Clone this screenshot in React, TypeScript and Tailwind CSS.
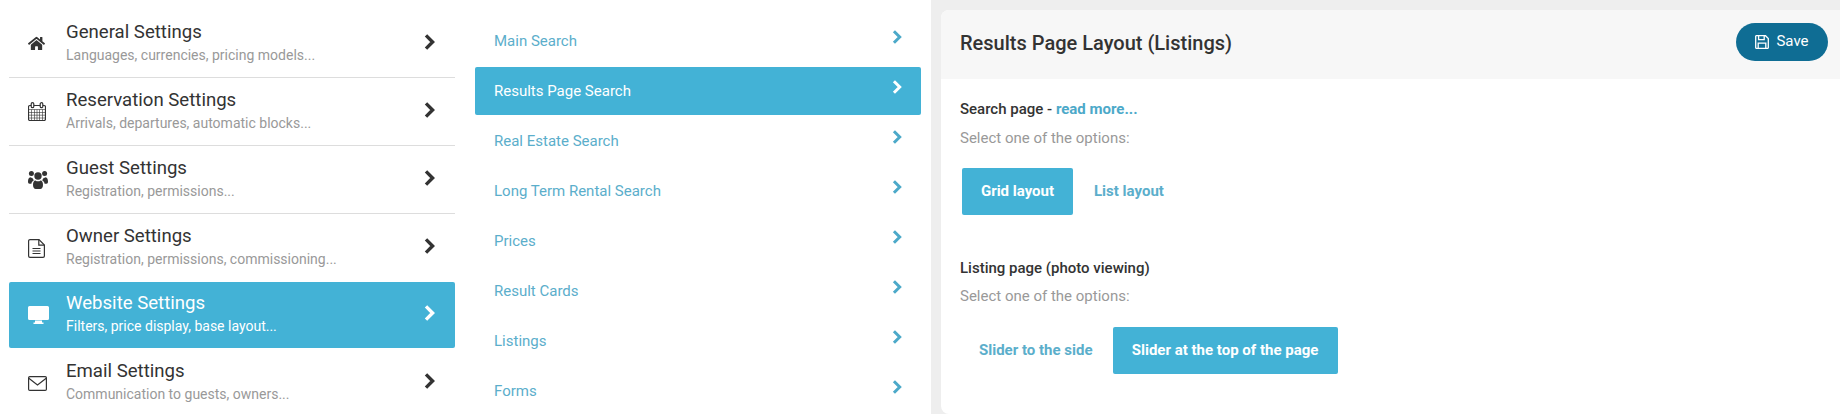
import { FaHome } from "react-icons/fa";

const Chevron = ({ className }: { className: string }) => (
  <svg viewBox="0 0 11 16" className={className} fill="none" stroke="currentColor" strokeWidth="3.4">
    <path d="M2 1.4 8.6 8 2 14.6" />
  </svg>
);

const CalendarIcon = () => (
  <svg viewBox="0 0 18 19" className="h-[19px] w-[18px]" fill="none" stroke="currentColor">
    <path d="M2 3.5h14a1.5 1.5 0 0 1 1.5 1.5v12a1.5 1.5 0 0 1-1.5 1.5H2A1.5 1.5 0 0 1 .5 17V5A1.5 1.5 0 0 1 2 3.5Z" strokeWidth="1.2" />
    <path d="M.5 7.5h17M.5 10.5h17M.5 13.2h17M.5 16h17M3.5 7.5v11M6.5 7.5v11M9 7.5v11M11.5 7.5v11M14.5 7.5v11" strokeWidth="0.6" />
    <rect x="3.2" y="0.7" width="2.6" height="5" rx="1.3" fill="#fff" strokeWidth="1.2" />
    <rect x="12.2" y="0.7" width="2.6" height="5" rx="1.3" fill="#fff" strokeWidth="1.2" />
  </svg>
);

const UsersIcon = () => (
  <svg viewBox="0 0 20 19" className="h-[19px] w-[20px]" fill="currentColor">
    <circle cx="10" cy="6" r="3.7" />
    <circle cx="3.4" cy="3.6" r="2.5" />
    <circle cx="16.6" cy="3.6" r="2.5" />
    <path d="M0 11.5C0 9 1 7.4 2.2 7.2c.8.6 1.4.8 2.2.8.4 1 1 1.8 1.6 2.3-1.4.6-2.4 2-2.6 3.4H1.6C.5 13.7 0 13 0 11.5Z" />
    <path d="M20 11.5c0-2.5-1-4.1-2.2-4.3-.8.6-1.4.8-2.2.8-.4 1-1 1.8-1.6 2.3 1.4.6 2.4 2 2.6 3.4h1.8c1.1 0 1.6-.7 1.6-2.2Z" />
    <path d="M5 14.7c0-2.6 1-4.2 2.4-4.3 1.6 1.2 3.6 1.2 5.2 0 1.4.1 2.4 1.7 2.4 4.3 0 2.5-1 4.3-2.8 4.3H7.8C6 19 5 17.2 5 14.7Z" />
  </svg>
);

const FileIcon = () => (
  <svg viewBox="0 0 17 19" className="h-[19px] w-[17px]" fill="none" stroke="currentColor" strokeWidth="1.2">
    <path d="M11 .6H2A1.4 1.4 0 0 0 .6 2v15A1.4 1.4 0 0 0 2 18.4h13a1.4 1.4 0 0 0 1.4-1.4V6L11 .6Z" />
    <path d="M10.8.8V6.2h5.4M4.5 9.5h8M4.5 12h8M4.5 14.5h8" />
  </svg>
);

const DesktopIcon = () => (
  <svg viewBox="0 0 21 18" className="h-[18px] w-[21px]" fill="currentColor">
    <path d="M1.5 0h18A1.5 1.5 0 0 1 21 1.5v11a1.5 1.5 0 0 1-1.5 1.5h-18A1.5 1.5 0 0 1 0 12.5v-11A1.5 1.5 0 0 1 1.5 0Z" />
    <path d="M7 14.5h7V16.5h1.5V18h-10v-1.5H7Z" />
  </svg>
);

const EnvelopeIcon = () => (
  <svg viewBox="0 0 19 15" className="h-[15px] w-[19px]" fill="none" stroke="currentColor" strokeWidth="1.2">
    <rect x="0.6" y="0.6" width="17.8" height="13.8" rx="1.2" />
    <path d="M.8 2.2 9.5 9l8.7-6.8" />
  </svg>
);

const SaveIcon = () => (
  <svg viewBox="0 0 14 14" className="h-[14px] w-[14px]" fill="none" stroke="currentColor" strokeWidth="1.3">
    <path d="M1.2.7h9.3l2.8 2.8v9.3a.5.5 0 0 1-.5.5H1.2a.5.5 0 0 1-.5-.5V1.2a.5.5 0 0 1 .5-.5Z" />
    <path d="M3.6 1v3.6h5.6V1M3.2 13V8.2h7.6V13" />
  </svg>
);

const settings = [
  { title: "General Settings", sub: "Languages, currencies, pricing models...", icon: <FaHome className="h-[17px] w-[17px]" /> },
  { title: "Reservation Settings", sub: "Arrivals, departures, automatic blocks...", icon: <CalendarIcon /> },
  { title: "Guest Settings", sub: "Registration, permissions...", icon: <UsersIcon /> },
  { title: "Owner Settings", sub: "Registration, permissions, commissioning...", icon: <FileIcon /> },
  { title: "Website Settings", sub: "Filters, price display, base layout...", icon: <DesktopIcon />, active: true },
  { title: "Email Settings", sub: "Communication to guests, owners...", icon: <EnvelopeIcon /> },
];

const searchItems = ["Main Search", "Results Page Search", "Real Estate Search", "Long Term Rental Search", "Prices", "Result Cards", "Listings", "Forms"];

const App = () => {
  return (
    <div className="flex h-[414px] w-full overflow-hidden bg-white font-['Roboto',sans-serif] text-[#333]">
      <div className="w-[470px] shrink-0 pl-[9px] pr-[15px] pt-[10px]">
        {settings.map((item, i) => {
          const nextActive = settings[i + 1]?.active;
          return (
            <div
              key={item.title}
              className={
                item.active
                  ? "mb-[1px] flex h-[66px] items-center rounded-[2px] bg-[#43b2d6] text-white"
                  : i === settings.length - 1 || nextActive
                    ? "flex h-[68px] items-center"
                    : "flex h-[68px] items-center border-b border-[#ddd]"
              }
            >
              <div className="flex w-[57px] items-center pl-[19px]">{item.icon}</div>
              <div className="flex-1 pb-[5px]">
                <div className="text-[18.6px] leading-[27px]">{item.title}</div>
                <div className={item.active ? "text-[14px] leading-[18px] text-white" : "text-[14px] leading-[18px] text-[#999]"}>{item.sub}</div>
              </div>
              <Chevron className="mb-[4px] mr-[20px] h-[16px] w-[11px]" />
            </div>
          );
        })}
      </div>

      <div className="w-[461px] shrink-0 pl-[5px] pr-[10px] pt-[17px]">
        {searchItems.map((name) => (
          <div
            key={name}
            className={
              name === "Results Page Search"
                ? "mb-[2px] flex h-[48px] items-center justify-between rounded-[2px] bg-[#43b2d6] pl-[19px] pr-[19px] text-[15px] text-white"
                : "mb-[2px] flex h-[48px] items-center justify-between pl-[19px] pr-[19px] text-[15px] text-[#5baecb]"
            }
          >
            <span>{name}</span>
            <Chevron className={name === "Results Page Search" ? "mb-[8px] h-[14px] w-[10px] text-white" : "mb-[8px] h-[14px] w-[10px] text-[#4ca9c9]"} />
          </div>
        ))}
      </div>

      <div className="flex-1 bg-[#eeeeee] pl-[10px] pt-[10px]">
        <div className="h-full rounded-l-[8px] bg-white">
          <div className="flex h-[69px] items-center justify-between rounded-tl-[8px] bg-[#f7f7f7] pl-[19px] pr-[12px]">
            <h2 className="mb-[3px] text-[20px] font-medium">Results Page Layout (Listings)</h2>
            <button className="mb-[6px] flex h-[38px] w-[92px] items-center justify-center gap-[7px] rounded-full bg-[#0f6d94] text-[15px] text-white">
              <SaveIcon />
              Save
            </button>
          </div>
          <div className="pl-[19px] pt-[20px]">
            <div className="text-[15px] font-medium leading-[20px]">
              Search page - <span className="font-bold text-[#4ca9c9]">read more...</span>
            </div>
            <div className="mt-[9px] text-[15px] leading-[20px] text-[#999]">Select one of the options:</div>
            <div className="mt-[20px] flex items-center pl-[2px] text-[15px] font-bold">
              <div className="flex h-[47px] w-[111px] items-center justify-center rounded-[2px] bg-[#43b2d6] text-white">Grid layout</div>
              <div className="ml-[21px] text-[#5baecb]">List layout</div>
            </div>
            <div className="mt-[43px] text-[15px] font-medium leading-[20px]">Listing page (photo viewing)</div>
            <div className="mt-[8px] text-[15px] leading-[20px] text-[#999]">Select one of the options:</div>
            <div className="mt-[21px] flex items-center text-[15px] font-bold">
              <div className="ml-[19px] text-[#5baecb]">Slider to the side</div>
              <div className="ml-[20px] flex h-[47px] w-[225px] items-center justify-center rounded-[2px] bg-[#43b2d6] text-white">Slider at the top of the page</div>
            </div>
          </div>
        </div>
      </div>
    </div>
  );
};

export default App;
